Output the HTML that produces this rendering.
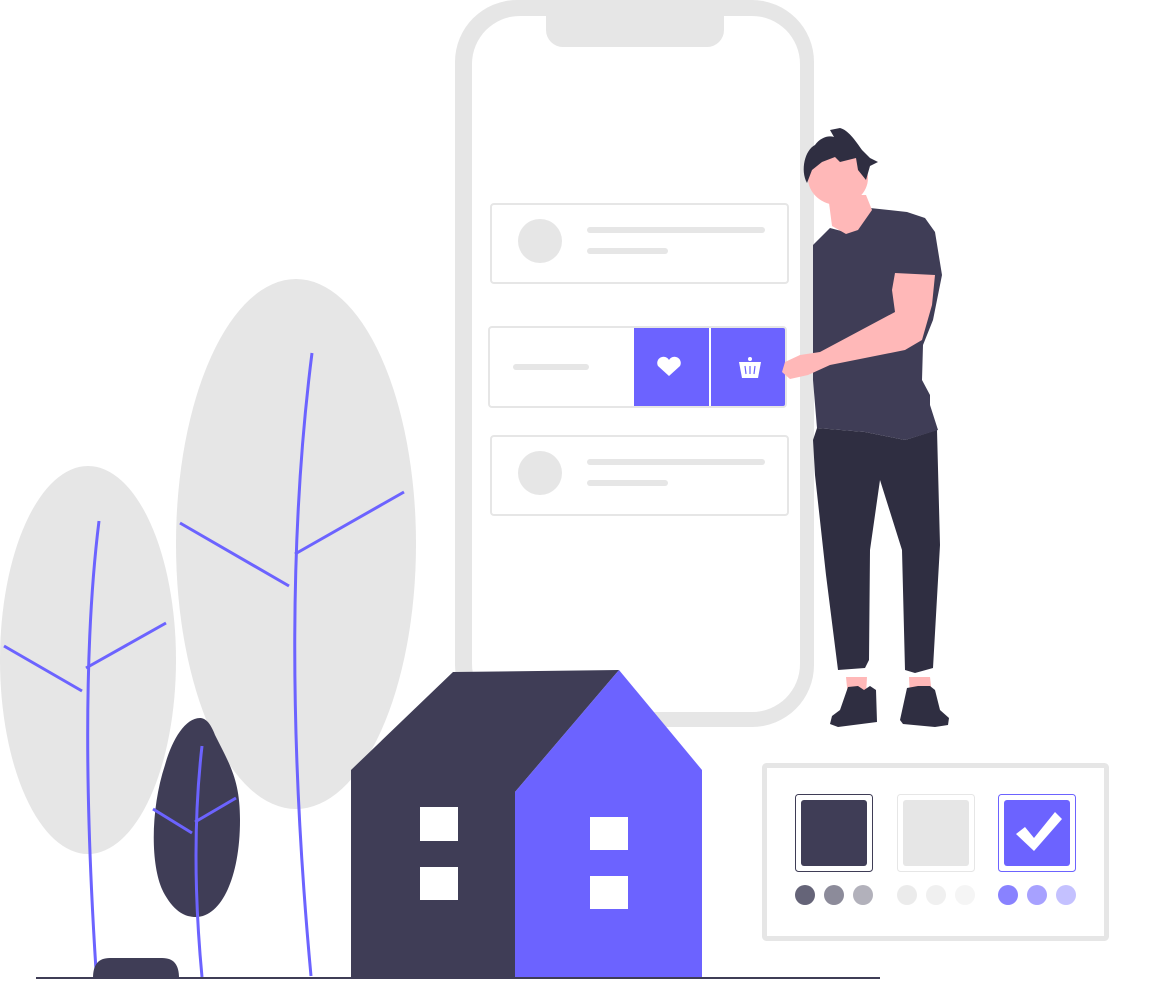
<!DOCTYPE html>
<html><head><meta charset="utf-8"><style>html,body{margin:0;padding:0;background:#fff}svg{display:block}</style></head>
<body>
<svg width="1159" height="988" viewBox="0 0 1159 988" xmlns="http://www.w3.org/2000/svg">
<!-- phone -->
<rect x="455" y="0" width="359" height="727" rx="62" fill="#e6e6e6"/>
<rect x="472" y="16" width="328" height="696" rx="48" fill="#fff"/>
<path d="M546 16 H724 V30 a17 17 0 0 1 -17 17 H563 a17 17 0 0 1 -17 -17 Z" fill="#e6e6e6"/>
<!-- cards -->
<rect x="491" y="204" width="297" height="79" rx="3" fill="#fff" stroke="#e6e6e6" stroke-width="2"/>
<circle cx="540" cy="241" r="22" fill="#e6e6e6"/>
<line x1="590" y1="230" x2="762" y2="230" stroke="#e6e6e6" stroke-width="6" stroke-linecap="round"/>
<line x1="590" y1="251" x2="665" y2="251" stroke="#e6e6e6" stroke-width="6" stroke-linecap="round"/>
<rect x="489" y="327" width="297" height="80" rx="3" fill="#fff" stroke="#e6e6e6" stroke-width="2"/>
<line x1="516" y1="367" x2="586" y2="367" stroke="#e6e6e6" stroke-width="6" stroke-linecap="round"/>
<rect x="634" y="328" width="75" height="78" fill="#6c63ff"/>
<path d="M711 328 H783 a2 2 0 0 1 2 2 V404 a2 2 0 0 1 -2 2 H711 Z" fill="#6c63ff"/>
<path d="M669 376 L658 366 a5.5 5.5 0 0 1 11 -6 a5.5 5.5 0 0 1 11 6 Z" fill="#fff"/>
<path d="M739 362 H761 L758 378 H742 Z" fill="#fff"/><circle cx="750" cy="359" r="2" fill="#fff"/>
<path d="M745 366 L746 374 M750 366 V374 M755 366 L754 374" stroke="#6c63ff" stroke-width="1.2"/>
<rect x="491" y="436" width="297" height="79" rx="3" fill="#fff" stroke="#e6e6e6" stroke-width="2"/>
<circle cx="540" cy="473" r="22" fill="#e6e6e6"/>
<line x1="590" y1="462" x2="762" y2="462" stroke="#e6e6e6" stroke-width="6" stroke-linecap="round"/>
<line x1="590" y1="483" x2="665" y2="483" stroke="#e6e6e6" stroke-width="6" stroke-linecap="round"/>
<!-- trees -->
<ellipse cx="88" cy="660" rx="88" ry="194" fill="#e6e6e6"/>
<path d="M99 521 Q78 690 96 970" stroke="#6c63ff" stroke-width="3" fill="none"/>
<path d="M4 646 L82 691 M86 668 L166 623" stroke="#6c63ff" stroke-width="3" fill="none"/>
<ellipse cx="296" cy="544" rx="120" ry="265" fill="#e6e6e6"/>
<path d="M312 353 Q278 620 311 976" stroke="#6c63ff" stroke-width="3" fill="none"/>
<path d="M180 523 L289 586 M295 554 L404 492" stroke="#6c63ff" stroke-width="3" fill="none"/>
<path d="M200 718 C185 718 172 740 165 765 C150 810 150 870 165 895 C175 912 185 917 196 917 C220 917 240 880 240 820 C240 780 230 765 215 735 C210 722 205 718 200 718 Z" fill="#3f3d56"/>
<path d="M202 746 Q190 850 202 977" stroke="#6c63ff" stroke-width="3" fill="none"/>
<path d="M153 809 L192 833 M195 822 L236 798" stroke="#6c63ff" stroke-width="3" fill="none"/>
<!-- house -->
<polygon points="351,770 453,672 619,670 515,792 515,978 351,978" fill="#3f3d56"/>
<polygon points="515,792 619,670 702,770 702,978 515,978" fill="#6c63ff"/>
<rect x="420" y="807" width="38" height="34" fill="#fff"/>
<rect x="420" y="867" width="38" height="33" fill="#fff"/>
<rect x="590" y="817" width="38" height="33" fill="#fff"/>
<rect x="590" y="876" width="38" height="33" fill="#fff"/>
<!-- ground -->
<path d="M93 978 C93 965 98 958 110 958 H162 C174 958 179 965 179 978 Z" fill="#3f3d56"/>
<line x1="36" y1="978" x2="880" y2="978" stroke="#3f3d56" stroke-width="2"/>
<!-- panel -->
<rect x="764.5" y="765.5" width="342" height="173" rx="2" fill="#fff" stroke="#e6e6e6" stroke-width="5"/>
<rect x="795.5" y="794.5" width="77" height="77" rx="3" fill="#fff" stroke="#3f3d56" stroke-width="1"/>
<rect x="801" y="800" width="66" height="66" rx="3" fill="#3f3d56"/>
<rect x="897.5" y="794.5" width="77" height="77" rx="3" fill="#fff" stroke="#e6e6e6" stroke-width="1"/>
<rect x="903" y="800" width="66" height="66" rx="3" fill="#e6e6e6"/>
<rect x="998.5" y="794.5" width="77" height="77" rx="3" fill="#fff" stroke="#6c63ff" stroke-width="1"/>
<rect x="1004" y="800" width="66" height="66" rx="3" fill="#6c63ff"/>
<polygon points="1016,834 1025,827 1034,838 1055,812 1062,819 1034,851" fill="#fff"/>
<circle cx="805" cy="895" r="10" fill="#3f3d56" opacity=".8"/>
<circle cx="834" cy="895" r="10" fill="#3f3d56" opacity=".6"/>
<circle cx="863" cy="895" r="10" fill="#3f3d56" opacity=".4"/>
<circle cx="907" cy="895" r="10" fill="#e6e6e6" opacity=".8"/>
<circle cx="936" cy="895" r="10" fill="#e6e6e6" opacity=".6"/>
<circle cx="965" cy="895" r="10" fill="#e6e6e6" opacity=".4"/>
<circle cx="1008" cy="895" r="10" fill="#6c63ff" opacity=".8"/>
<circle cx="1037" cy="895" r="10" fill="#6c63ff" opacity=".6"/>
<circle cx="1066" cy="895" r="10" fill="#6c63ff" opacity=".4"/>
<!-- person -->
<path d="M846 677 L867 677 L866 695 L848 697 Z" fill="#ffb8b8"/>
<path d="M909 677 L930 677 L932 695 L910 697 Z" fill="#ffb8b8"/>
<path d="M848 687 L858 686 L864 690 L870 686 L876 690 L877 722 L838 727 L830 724 L832 716 L840 710 Z" fill="#2f2e41"/>
<path d="M907 688 L918 686 L930 686 L935 690 L940 710 L949 718 L948 725 L935 727 L903 724 L900 720 Z" fill="#2f2e41"/>
<path d="M817 428 L865 432 L905 440 L937 430 L940 545 L933 668 L915 673 L905 670 L902 550 L880 480 L870 550 L869 660 L865 668 L838 670 L826 575 L815 475 L813 440 Z" fill="#2f2e41"/>
<path d="M813 245 L830 228 L845 232 L870 208 L907 212 L925 218 L935 232 L942 275 L933 320 L923 345 L922 380 L930 395 L930 405 L938 430 L905 440 L865 432 L817 428 L813 380 Z" fill="#3f3d56"/>
<path d="M828 195 L866 195 L872 210 L858 230 L846 234 L832 226 Z" fill="#ffb8b8"/>
<ellipse cx="838" cy="178" rx="30" ry="27" fill="#ffb8b8"/>
<path d="M895 273 L935 275 L932 305 L922 340 L905 350 L830 365 L808 375 L790 379 L782 372 L785 362 L800 355 L820 352 L895 312 L892 290 Z" fill="#ffb8b8"/>
<path d="M813 311 L826 310 L828 330 L822 345 L818 370 L826 385 L818 415 L813 420 Z" fill="#ffb8b8" opacity=".0"/>
<path d="M807 183 C800 170 805 150 815 145 C820 138 828 135 834 137 L830 130 L840 128 C848 130 855 140 862 150 L870 158 L878 162 L870 166 L866 180 L858 170 L856 158 L840 162 L835 157 L822 162 L812 170 Z" fill="#2f2e41"/>
</svg>
</body></html>
